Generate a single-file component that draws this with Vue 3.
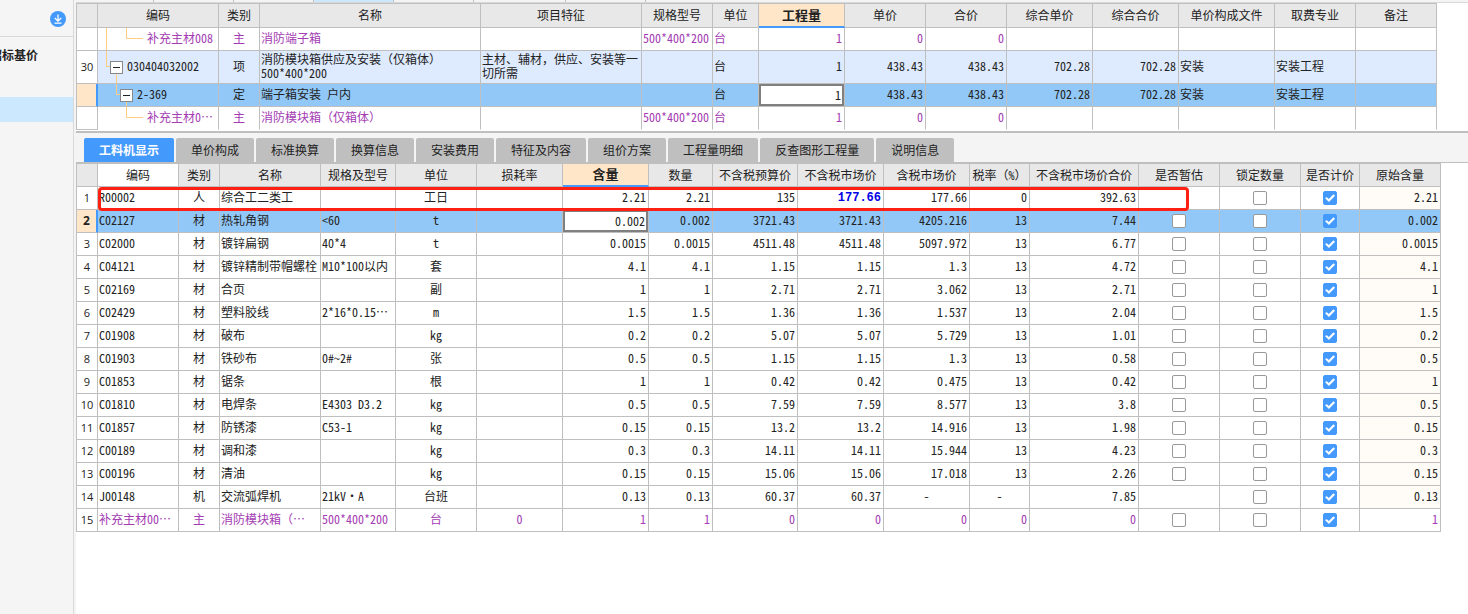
<script setup>
import { h } from 'vue'

const topCols = [
  { w: 21, t: '' }, { w: 121, t: '编码' }, { w: 41, t: '类别' }, { w: 221, t: '名称' },
  { w: 161, t: '项目特征' }, { w: 71, t: '规格型号' }, { w: 46, t: '单位' },
  { w: 86, t: '工程量', on: true }, { w: 81, t: '单价' }, { w: 81, t: '合价' },
  { w: 86, t: '综合单价' }, { w: 86, t: '综合合价' }, { w: 96, t: '单价构成文件' },
  { w: 81, t: '取费专业' }, { w: 81, t: '备注' },
]
const topAlign = ['c', 'l', 'c', 'l', 'l', 'l', 'l', 'r', 'r', 'r', 'r', 'r', 'l', 'l', 'l']
const topRows = [
  { kind: 'sub', tree: 'M9.5 0V23M29.5 0V10.5H46', pad: 'pad3', cells: ['', '补充主材008', '主', '消防端子箱', '', '500*400*200', '台', '1', '0', '0', '', '', '', '', ''] },
  { kind: 'item', tree: 'M9.5 0V15.5H13M19.5 22V33', pad: 'pad1', toggle: true, cells: ['30', '030404032002', '项', '消防模块箱供应及安装（仅箱体）\n500*400*200', '主材、辅材，供应、安装等一切所需', '', '台', '1', '438.43', '438.43', '702.28', '702.28', '安装', '安装工程', ''] },
  { kind: 'current', tree: 'M19.5 0V10.5H23M29.5 17V23', pad: 'pad2', toggle: true, cells: ['', '2-369', '定', '端子箱安装 户内', '', '', '台', '1', '438.43', '438.43', '702.28', '702.28', '安装', '安装工程', ''] },
  { kind: 'sub', tree: 'M29.5 0V10.5H46', pad: 'pad3', cells: ['', '补充主材0…', '主', '消防模块箱（仅箱体）', '', '500*400*200', '台', '1', '0', '0', '', '', '', '', ''] },
]

const tabs = ['工料机显示', '单价构成', '标准换算', '换算信息', '安装费用', '特征及内容', '组价方案', '工程量明细', '反查图形工程量', '说明信息']

const cols = [
  { w: 21, t: '' }, { w: 81, t: '编码', sorted: true }, { w: 41, t: '类别' }, { w: 101, t: '名称' },
  { w: 75, t: '规格及型号' }, { w: 81, t: '单位' }, { w: 86, t: '损耗率' },
  { w: 86, t: '含量', on: true }, { w: 64, t: '数量' }, { w: 85, t: '不含税预算价' },
  { w: 86, t: '不含税市场价' }, { w: 86, t: '含税市场价' }, { w: 60, t: '税率（%）' },
  { w: 109, t: '不含税市场价合价' }, { w: 81, t: '是否暂估' }, { w: 81, t: '锁定数量' },
  { w: 59, t: '是否计价' }, { w: 81, t: '原始含量' },
]
const align = ['c', 'l', 'c', 'l', 'l', 'c', 'c', 'r', 'r', 'r', 'r', 'r', 'r', 'r']
const rows = [
  ['R00002', '人', '综合工二类工', '', '工日', '', '2.21', '2.21', '135', '177.66', '177.66', '0', '392.63'],
  ['C02127', '材', '热轧角钢', '<60', 't', '', '0.002', '0.002', '3721.43', '3721.43', '4205.216', '13', '7.44'],
  ['C02000', '材', '镀锌扁钢', '40*4', 't', '', '0.0015', '0.0015', '4511.48', '4511.48', '5097.972', '13', '6.77'],
  ['C04121', '材', '镀锌精制带帽螺栓', 'M10*100以内', '套', '', '4.1', '4.1', '1.15', '1.15', '1.3', '13', '4.72'],
  ['C02169', '材', '合页', '', '副', '', '1', '1', '2.71', '2.71', '3.062', '13', '2.71'],
  ['C02429', '材', '塑料胶线', '2*16*0.15…', 'm', '', '1.5', '1.5', '1.36', '1.36', '1.537', '13', '2.04'],
  ['C01908', '材', '破布', '', 'kg', '', '0.2', '0.2', '5.07', '5.07', '5.729', '13', '1.01'],
  ['C01903', '材', '铁砂布', '0#~2#', '张', '', '0.5', '0.5', '1.15', '1.15', '1.3', '13', '0.58'],
  ['C01853', '材', '锯条', '', '根', '', '1', '1', '0.42', '0.42', '0.475', '13', '0.42'],
  ['C01810', '材', '电焊条', 'E4303 D3.2', 'kg', '', '0.5', '0.5', '7.59', '7.59', '8.577', '13', '3.8'],
  ['C01857', '材', '防锈漆', 'C53-1', 'kg', '', '0.15', '0.15', '13.2', '13.2', '14.916', '13', '1.98'],
  ['C00189', '材', '调和漆', '', 'kg', '', '0.3', '0.3', '14.11', '14.11', '15.944', '13', '4.23'],
  ['C00196', '材', '清油', '', 'kg', '', '0.15', '0.15', '15.06', '15.06', '17.018', '13', '2.26'],
  ['J00148', '机', '交流弧焊机', '21kV·A', '台班', '', '0.13', '0.13', '60.37', '60.37', '-', '-', '7.85'],
  ['补充主材00…', '主', '消防模块箱（…', '500*400*200', '台', '0', '1', '1', '0', '0', '0', '0', '0'],
]
const current = 1
const noEstimate = [0, 13]

const Cols = ({ list }) => h('colgroup', list.map((c) => h('col', { style: { width: c.w + 'px' } })))
Cols.props = ['list']

// Latin runs use half-width forms; Chinese punctuation keeps its full width.
const Txt = ({ t }) => h('span', { class: 'txt' }, t.split(/([\x20-\x7e]+)/).filter(Boolean)
  .map((s) => (/^[\x20-\x7e]/.test(s) ? h('span', { class: 'half' }, s) : s)))
Txt.props = ['t']
</script>

<template>
  <div class="app">
    <aside class="side">
      <div class="side-head">
        <button class="round" aria-label="下载">
          <svg width="16" height="16" viewBox="0 0 16 16"><circle cx="8" cy="8" r="8" fill="#4499fd" /><path d="M8 3.500v6.500M4.800 7L8 10.200 11.200 7M4.500 12.200h7" fill="none" stroke="#fff" stroke-width="1.300" /></svg>
        </button>
      </div>
      <div class="side-item"><span>招标基价</span></div>
      <div class="side-current"></div>
    </aside>

    <main class="main">
      <div class="strip">
        <i class="s1"></i><i class="s2"></i><i class="s2"></i><i class="s2 lit"></i><i class="s2"></i><i class="s3"></i><i class="s2"></i>
      </div>
      <section class="upper">
        <table class="grid">
          <Cols :list="topCols" />
          <thead>
            <tr><th v-for="(c, i) in topCols" :key="i" :class="{ on: c.on }"><Txt :t="c.t" /></th></tr>
          </thead>
          <tbody>
            <tr v-for="(r, ri) in topRows" :key="ri" :class="r.kind">
              <td v-for="(t, i) in r.cells" :key="i" :class="[topAlign[i], { no: i === 0, active: r.kind === 'current' && i === 7 }]">
                <div v-if="i === 1" class="code" :class="r.pad">
                  <svg class="tree" width="50" height="34"><path :d="r.tree" fill="none" stroke="#ffcc80" /></svg>
                  <button v-if="r.toggle" class="toggle" aria-label="折叠"></button>
                  <Txt :t="t" />
                </div>
                <input v-else-if="r.kind === 'current' && i === 7" class="edit" :value="t" aria-label="工程量" />
                <template v-else-if="i === 0">{{ t }}</template>
                <Txt v-else :t="t" />
              </td>
            </tr>
          </tbody>
        </table>
      </section>

      <nav class="tabs">
        <button v-for="(t, i) in tabs" :key="t" class="tab" :class="{ sel: i === 0 }">{{ t }}</button>
      </nav>

      <section class="lower">
        <table class="grid">
          <Cols :list="cols" />
          <thead>
            <tr><th v-for="(c, i) in cols" :key="i" :class="{ on: c.on, sorted: c.sorted }"><Txt :t="c.t" /></th></tr>
          </thead>
          <tbody>
            <tr v-for="(r, ri) in rows" :key="ri" :class="{ current: ri === current, sub: ri === 14 }">
              <td class="c no">{{ ri + 1 }}</td>
              <td v-for="(t, i) in r" :key="i" :class="[t === '-' ? 'c' : align[i + 1], { active: ri === current && i === 6, price: ri === 0 && i === 9 }]">
                <input v-if="ri === current && i === 6" class="edit" :value="t" aria-label="含量" />
                <Txt v-else :t="t" />
              </td>
              <td class="c"><input v-if="!noEstimate.includes(ri)" type="checkbox" :aria-label="'是否暂估 ' + (ri + 1)" /></td>
              <td class="c"><input type="checkbox" :aria-label="'锁定数量 ' + (ri + 1)" /></td>
              <td class="c"><input type="checkbox" checked :aria-label="'是否计价 ' + (ri + 1)" /></td>
              <td class="r orig"><Txt :t="r[6]" /></td>
            </tr>
          </tbody>
        </table>
        <div class="mark"></div>
      </section>
    </main>
  </div>
</template>

<style>
body { background: #fff; }
</style>

<style scoped>
* { box-sizing: border-box; }
.app {
  display: flex;
  min-height: 100vh;
  overflow: hidden;
  font: 12px/14px "Noto Sans CJK SC", sans-serif;
  color: #222;
}
button, input { font: inherit; color: inherit; margin: 0; padding: 0; }
.side { width: 74px; flex: none; background: #f5f5f5; border-right: 1px solid #d9d9d9; overflow: hidden; }
.side-head { height: 37px; padding: 11px 7px 0 0; border-bottom: 1px solid #d9d9d9; display: flex; justify-content: flex-end; }
.round { width: 16px; height: 16px; border: 0; background: none; display: block; }
.round svg { display: block; }
.side-item { width: 38px; height: 60px; padding-top: 11px; display: flex; justify-content: flex-end; white-space: nowrap; font-weight: 700; overflow: hidden; }
.side-current { height: 25px; background: #cce8ff; }
.main { flex: 1; min-width: 0; padding-left: 2px; background: #f4f4f4; display: flex; flex-direction: column; }
.strip { height: 3px; display: flex; border-bottom: 1px solid #d9d9d9; }
.strip i { border-right: 1px solid #bfbfbf; width: 80px; }
.strip .s1 { width: 78px; }
.strip .s3 { width: 92px; }
.strip .lit { background: #cce8ff; }
.upper { height: 130px; background: #fff; border-bottom: 2px solid #bfbfbf; overflow: hidden; }
.grid { table-layout: fixed; width: 0; border-collapse: separate; border-spacing: 0; border-left: 1px solid #bfbfbf; border-top: 1px solid #bfbfbf; }
.grid :deep(.half) { font-feature-settings: "hwid"; }
th, td { padding: 0; border-right: 1px solid #bfbfbf; border-bottom: 1px solid #bfbfbf; white-space: nowrap; overflow: hidden; }
th { height: 23px; font-weight: 400; background: #e8e8e8; }
.upper th { height: 24px; }
th.on { background: #ffe6c8; font-size: 13px; font-weight: 700; border-bottom: 2px solid #4499fd; }
th.sorted { background: #fff; }
th :deep(.txt) { display: block; padding-bottom: 1px; }
td { height: 23px; background: #fff; }
.c { text-align: center; }
.l { text-align: left; padding-left: 1px; }
.r { text-align: right; padding-right: 2px; }
td :deep(.txt) { display: block; white-space: pre-wrap; padding-bottom: 2px; }
.lower td :deep(.txt) { white-space: pre; }
.lower td.price :deep(.txt) { padding-bottom: 0; }
.item td { height: 33px; background: #deeafe; }
.current td { background: #92c8f7; }
.sub td { color: #a33bb3; }
td.no { background: #fff; color: #222; font-family: "Open Sans", sans-serif; font-size: 11px; }
.current td.no { background: #ffe6c8; border-right: 2px solid #4499fd; font-weight: 700; font-size: 12px; }
.upper tbody tr:last-child td:not(.no) { border-bottom-color: #fff; }
.code { position: relative; display: flex; align-items: center; height: 22px; }
.item .code { height: 32px; }
.tree { position: absolute; left: -2px; top: 0; }
.toggle { position: relative; width: 13px; height: 13px; margin-right: 4px; border: 1px solid #888; background: #fff; }
.toggle::before { content: ""; position: absolute; left: 2px; right: 2px; top: 5px; height: 1px; background: #222; }
.pad1 { padding-left: 11px; }
.pad2 { padding-left: 21px; }
.pad3 { padding-left: 48px; }
td.active { padding: 0; }
.edit { display: block; width: 100%; height: 22px; padding: 0 1px 2px 0; border: 2px solid #808080; background: #fff; text-align: right; outline: 0; font-feature-settings: "hwid"; }
.price { color: #0000e6; font-family: "Liberation Mono", monospace; font-weight: 700; }
.orig { background: #fffbf6; }
.sub .orig { background: #fff; }
.current .orig { background: #92c8f7; }
.tabs { display: flex; gap: 2px; padding: 5px 8px 0; height: 30px; border-bottom: 1px solid #bfbfbf; }
.tab { height: 24px; padding: 0 15px; border: 0; border-radius: 2px 2px 0 0; background: #bfbfbf; }
.tab.sel { background: #4499fd; color: #fff; font-weight: 700; }
.lower { position: relative; flex: 1; background: #fff; }
.mark { position: absolute; left: 22px; top: 24px; width: 1091px; height: 24px; border: 3px solid #ff2014; border-radius: 4px; pointer-events: none; }
input[type="checkbox"] { appearance: none; display: block; width: 14px; height: 14px; margin: 0 auto; border: 1px solid #999; border-radius: 2px; background: #fff; }
input[type="checkbox"]:checked { border-color: #4499fd; background: #4499fd; }
input[type="checkbox"]:checked::before { content: ""; display: block; width: 12px; height: 12px; background: #fff; clip-path: polygon(8% 51%, 24% 43%, 40% 58%, 79% 18%, 92% 31%, 41% 83%); }
</style>
